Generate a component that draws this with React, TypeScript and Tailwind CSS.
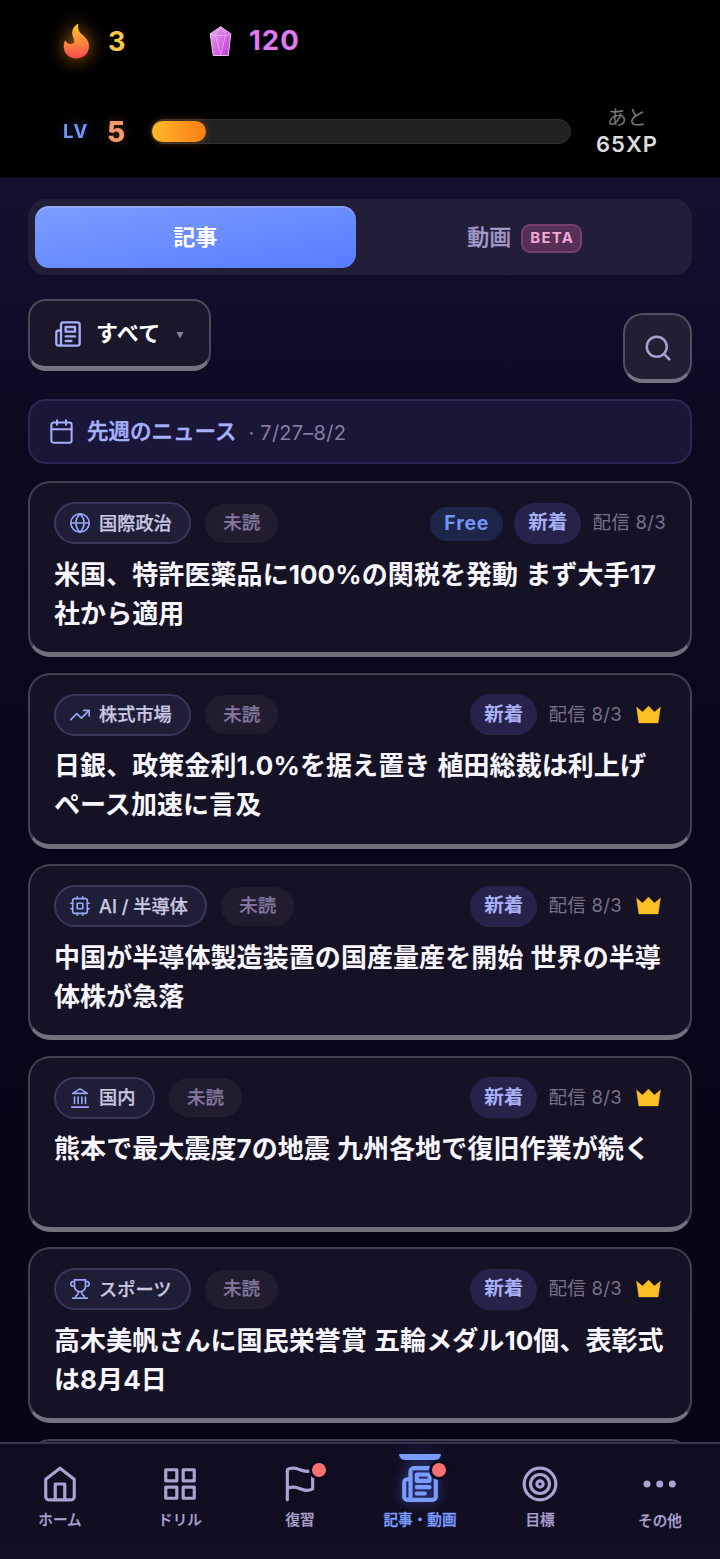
import type { ReactNode } from 'react';

type IconName = 'globe' | 'trend' | 'cpu' | 'landmark' | 'trophy';

interface Article {
  id: number;
  category: string;
  icon: IconName;
  title: string;
  free?: boolean;
}

const ARTICLES: Article[] = [
  { id: 1, category: '国際政治', icon: 'globe', title: '米国、特許医薬品に100%の関税を発動 まず大手17社から適用', free: true },
  { id: 2, category: '株式市場', icon: 'trend', title: '日銀、政策金利1.0%を据え置き 植田総裁は利上げペース加速に言及' },
  { id: 3, category: 'AI / 半導体', icon: 'cpu', title: '中国が半導体製造装置の国産量産を開始 世界の半導体株が急落' },
  { id: 4, category: '国内', icon: 'landmark', title: '熊本で最大震度7の地震 九州各地で復旧作業が続く' },
  { id: 5, category: 'スポーツ', icon: 'trophy', title: '高木美帆さんに国民栄誉賞 五輪メダル10個、表彰式は8月4日' },
];

const CATEGORY_ICONS: Record<IconName, ReactNode> = {
  globe: (
    <>
      <circle cx="12" cy="12" r="10" />
      <path d="M2 12h20M12 2c3 3 4.500 6.500 4.500 10S15 19 12 22c-3-3-4.500-6.500-4.500-10S9 5 12 2z" />
    </>
  ),
  trend: <path d="M22 7l-8.500 8.500-5-5L2 17M16 7h6v6" />,
  cpu: (
    <>
      <rect x="4" y="4" width="16" height="16" rx="2" />
      <rect x="9" y="9" width="6" height="6" />
      <path d="M9 2v2M15 2v2M9 20v2M15 20v2M2 9h2M2 15h2M20 9h2M20 15h2" />
    </>
  ),
  landmark: <path d="M3 22h18M6 18v-7M10 18v-7M14 18v-7M18 18v-7M12 2l8 5H4z" />,
  trophy: (
    <path d="M6 9H4.500a2.500 2.500 0 0 1 0-5H6M18 9h1.500a2.500 2.500 0 0 0 0-5H18M4 22h16M10 14.660V17c0 .550-.470.980-.970 1.210C7.850 18.750 7 20.240 7 22M14 14.660V17c0 .550.470.980.970 1.210C16.150 18.750 17 20.240 17 22M18 2H6v7a6 6 0 0 0 12 0V2z" />
  ),
};

function Icon({ size, stroke = 2, className = '', children }: { size: number; stroke?: number; className?: string; children: ReactNode }) {
  return (
    <svg
      width={size}
      height={size}
      viewBox="0 0 24 24"
      fill="none"
      stroke="currentColor"
      strokeWidth={stroke}
      strokeLinecap="round"
      strokeLinejoin="round"
      className={`shrink-0 ${className}`}
    >
      {children}
    </svg>
  );
}

const newspaper = (
  <>
    <path d="M4 22h16a2 2 0 0 0 2-2V4a2 2 0 0 0-2-2H8a2 2 0 0 0-2 2v16a2 2 0 0 1-2 2zm0 0a2 2 0 0 1-2-2v-9c0-1.100.9-2 2-2h2" />
    <path d="M18 14h-8M15 18h-5M10 6h8v4h-8z" />
  </>
);

function Flame() {
  return (
    <svg width="26" height="35" viewBox="0 0 26 35" className="shrink-0 drop-shadow-[0_0_9px_rgba(251,146,20,0.75)]">
      <defs>
        <linearGradient id="flame" x1="0" y1="0" x2="0" y2="1">
          <stop offset="0" stopColor="#fcc52f" />
          <stop offset="0.5" stopColor="#fb8c3c" />
          <stop offset="1" stopColor="#f5484a" />
        </linearGradient>
      </defs>
      <path
        fill="url(#flame)"
        d="M14.500 0C11 2 8.800 6 9.200 10C9.500 13 11.700 15 11 18C10 21 4.500 20.800 2.200 16.200C.4 19 .4 23 1.400 26.500C3.200 31.500 8 34.500 13.200 34.500C20.500 34.500 26 29.500 26 22C26 16 21.500 13 18 9.500C15.500 6.800 14.600 3.500 15.400 0.400C15.300 -.1 14.900 -.1 14.500 0Z"
      />
    </svg>
  );
}

function Gem() {
  return (
    <svg width="23" height="31" viewBox="0 0 23 31" className="shrink-0">
      <defs>
        <linearGradient id="gem" x1="0" y1="0" x2="1" y2="1">
          <stop offset="0" stopColor="#eda6f2" />
          <stop offset="1" stopColor="#c03ad6" />
        </linearGradient>
      </defs>
      <path d="M11.700 0.700L21.800 7.800L19.300 29.500H4.200L1.200 7.800Z" fill="url(#gem)" stroke="#ecc3f3" strokeWidth="1" />
      <path d="M1.200 7.800L5.500 9.500H17.500L21.800 7.800M5.500 9.500L11.700 0.700L17.500 9.500M6.500 9.500L11.700 29L16.500 9.500" fill="none" stroke="#f3cff8" strokeOpacity="0.600" strokeWidth="0.800" />
    </svg>
  );
}

function StatusHeader() {
  return (
    <header className="h-[178px] shrink-0 border-b border-[#0e0c18] bg-black px-[63px] font-bold">
      <div className="flex h-[82px] items-center">
        <Flame />
        <span className="ml-[19px] w-[101px] text-[27px] leading-none text-[#fdc944]">3</span>
        <Gem />
        <span className="ml-[17px] text-[27.500px] leading-none tracking-[1px] text-[#e07af5]">120</span>
      </div>
      <div className="flex h-[99px] items-center">
        <span className="w-[44px] shrink-0 text-[18.500px] tracking-[1.5px] text-[#7398f8] drop-shadow-[0_0_6px_rgba(91,127,255,0.4)]">LV</span>
        <span className="w-[44px] shrink-0 text-[28px] leading-none font-extrabold text-[#f29a6c] drop-shadow-[0_0_4px_rgba(242,130,80,0.3)]">5</span>
        <div className="h-[25px] w-[420px] shrink-0 rounded-full border border-[#303030] bg-[#212121] py-px">
          <div className="h-[21px] w-[54px] rounded-full bg-linear-to-r from-[#fdb827] to-[#fb7c14] shadow-[0_0_8px_rgba(251,146,20,0.3)]" />
        </div>
        <div className="mb-[2px] ml-[25px] flex shrink-0 flex-col items-center">
          <span className="text-[20px] leading-[26px] font-normal text-[#777777]">あと</span>
          <span className="text-[22px] leading-[26px] font-semibold tracking-[1px] text-[#dcdcdc]">65XP</span>
        </div>
      </div>
    </header>
  );
}

function Tabs() {
  return (
    <div className="flex h-[76px] rounded-[18px] bg-[#231e37] p-[7px] text-[22px]">
      <button className="flex-1 rounded-[14px] bg-linear-to-br from-[#7d9dff] to-[#587cff] font-bold text-white shadow-[inset_0_2px_0_rgba(255,255,255,0.16)]">
        記事
      </button>
      <button className="flex flex-1 items-center justify-center gap-[10px] pl-[9px] font-medium text-[#a198c8] [-webkit-text-stroke:0.3px_currentColor]">
        動画
        <span className="mt-[2px] flex h-[29px] items-center rounded-[9px] border-2 border-[#75406d] bg-[#553052] pr-[6px] pl-[7px] text-[15px] font-bold tracking-[1.3px] text-[#f3a5d8] [-webkit-text-stroke:0]">
          BETA
        </span>
      </button>
    </div>
  );
}

function ArticleCard({ article }: { article: Article }) {
  return (
    <article className="h-[176px] shrink-0 rounded-[22px] border-2 border-b-[5px] border-[#45404f] border-b-[#736f7d] bg-[#161225] px-6 pt-[19px]">
      <div className="flex h-[42px] items-center">
        <span className="flex h-[42px] items-center gap-[8px] rounded-full border-2 border-[#39385a] bg-[#1e1e36] pr-[17.500px] pl-[13px] text-[18.200px] leading-none font-medium text-[#c9c8e0] [-webkit-text-stroke:0.25px_currentColor]">
          <Icon size={22} stroke={1.8} className="text-[#9ba5f8]">{CATEGORY_ICONS[article.icon]}</Icon>
          {article.category}
        </span>
        <span className="ml-[14px] flex h-[39px] items-center rounded-full bg-[#211c2e] px-[18px] text-[18.500px] font-medium text-[#81779f] [-webkit-text-stroke:0.25px_currentColor]">
          未読
        </span>
        <div className="ml-auto flex items-center gap-[11px]">
          {article.free && (
            <span className="mt-px flex h-[34px] items-center rounded-full bg-[#1d2549] px-[14px] text-[19.500px] font-bold tracking-[0.8px] text-[#7194f5]">Free</span>
          )}
          <span className="flex h-[41px] items-center rounded-full bg-[#26234a] px-[14px] text-[19.600px] font-bold text-[#a9b0f7]">新着</span>
          <span className="text-[18.500px] tracking-[0.3px] text-[#777087]">配信 8/3</span>
          {!article.free && (
            <svg width="33" height="24" viewBox="0.500 0 33 24" className="shrink-0">
              <path d="M4 4L10 9L16 3L22 9L28 4L25.700 20H6.300Z" fill="#fbbf24" stroke="#fbbf24" strokeWidth="0.300" strokeLinejoin="round" />
            </svg>
          )}
        </div>
      </div>
      <h2 className="mt-[10.500px] text-[26px] leading-[39px] font-bold tracking-[0.080px] break-all [word-spacing:0.8px] text-[#f7f6fc]">{article.title}</h2>
    </article>
  );
}

function NavItem({ label, icon, active, dot }: { label: string; icon: ReactNode; active?: boolean; dot?: boolean }) {
  return (
    <button className={`relative flex flex-1 flex-col items-center pt-[21px] ${active ? 'text-[#7b9cff]' : 'text-[#aba2d2]'}`}>
      {active && <span className="absolute top-[10px] h-[6px] w-[42px] rounded-b-full bg-[#7b9cff] shadow-[0_0_16px_rgba(91,127,255,0.4)]" />}
      <span className="relative">
        {icon}
        {dot && <span className="absolute -top-[5px] -right-[10px] size-[20px] rounded-full border-3 border-[#0d091c] bg-[#f87171]" />}
      </span>
      <span className={`mt-[7px] text-[14.600px] leading-[20px] font-medium ${active ? '[-webkit-text-stroke:0.4px_currentColor]' : '[-webkit-text-stroke:0.25px_currentColor]'}`}>{label}</span>
    </button>
  );
}

function BottomNav() {
  return (
    <nav className="flex h-[117px] shrink-0 border-t-2 border-[#39344a] bg-linear-to-b from-[#100c20] to-[#120f22]">
      <NavItem
        label="ホーム"
        icon={<Icon size={38}><path d="M3 9l9-7 9 7v11a2 2 0 0 1-2 2H5a2 2 0 0 1-2-2zM9 22V12h6v10" /></Icon>}
      />
      <NavItem label="ドリル" icon={<Icon size={38}><path d="M3 3h7v7H3zM14 3h7v7h-7zM14 14h7v7h-7zM3 14h7v7H3z" /></Icon>} />
      <NavItem
        label="復習"
        dot
        icon={<Icon size={38}><path d="M4 15s1-1 4-1 5 2 8 2 4-1 4-1V3s-1 1-4 1-5-2-8-2-4 1-4 1zM4 22v-7" /></Icon>}
      />
      <NavItem
        label="記事・動画"
        active
        dot
        icon={<Icon size={38} stroke={2.6} className="drop-shadow-[0_0_6px_rgba(91,127,255,0.5)]">{newspaper}</Icon>}
      />
      <NavItem
        label="目標"
        icon={<Icon size={38}><circle cx="12" cy="12" r="10" /><circle cx="12" cy="12" r="6" /><circle cx="12" cy="12" r="2" /></Icon>}
      />
      <NavItem
        label="その他"
        icon={
          <svg width="40" height="40" viewBox="0 0 40 40" fill="currentColor" className="-mt-px">
            <circle cx="7" cy="20" r="3.500" />
            <circle cx="19.700" cy="20" r="3.500" />
            <circle cx="32.300" cy="20" r="3.500" />
          </svg>
        }
      />
    </nav>
  );
}

export default function App() {
  return (
    <div className="flex h-[1559px] w-[720px] flex-col overflow-hidden bg-[#080518] font-['Inter','Noto_Sans_CJK_JP',sans-serif]">
      <StatusHeader />
      <main className="flex min-h-0 flex-1 flex-col overflow-hidden bg-linear-to-b from-[#161030] via-[#0c081d] via-25% to-[#070415] px-7 pt-[21px]">
        <div className="shrink-0"><Tabs /></div>
        <div className="mt-6 flex shrink-0 items-start justify-between">
          <button className="flex h-[72px] w-[183px] items-center rounded-[18px] border-2 border-b-[5px] border-[#4c4759] border-b-[#77727f] bg-[#1b172b] pl-6 text-[22px] font-bold text-white">
            <Icon size={28} stroke={2} className="text-[#a5b0fb]">{newspaper}</Icon>
            <span className="ml-[14px] tracking-[0.3px]">すべて</span>
            <svg width="8" height="8" viewBox="0 0 8 8" className="mt-[3px] ml-4 text-[#8a84a0]"><path d="M0.500 1h7L4 7.500z" fill="currentColor" /></svg>
          </button>
          <button className="mt-[14px] flex h-[70px] w-[69px] items-center justify-center rounded-[20px] border-2 border-b-4 border-[#534e60] border-b-[#777281] bg-[#231e32] text-[#aaa0cf]">
            <Icon size={30} className="mt-px"><circle cx="11" cy="11" r="8" /><path d="M21 21l-4.350-4.350" /></Icon>
          </button>
        </div>
        <div className="mt-4 flex h-[65px] shrink-0 items-center rounded-[18px] border-2 border-[#2d2752] bg-[#1a1638] pl-[18px] text-[#a5b0fb]">
          <Icon size={27} stroke={1.8}><rect x="3" y="4" width="18" height="18" rx="2" /><path d="M16 2v4M8 2v4M3 10h18" /></Icon>
          <span className="ml-3 text-[21.500px] font-medium [-webkit-text-stroke:0.5px_currentColor]">先週のニュース</span>
          <span className="mt-[2px] ml-3 text-[20px] tracking-[0.25px] text-[#857d9f]">· 7/27–8/2</span>
        </div>
        <div className="mt-[17px] flex flex-col gap-[15.500px]">
          {ARTICLES.map(a => <ArticleCard key={a.id} article={a} />)}
          <div className="h-[176px] shrink-0 rounded-[22px] border-2 border-[#45404f] bg-[#161225]" />
        </div>
      </main>
      <BottomNav />
    </div>
  );
}
